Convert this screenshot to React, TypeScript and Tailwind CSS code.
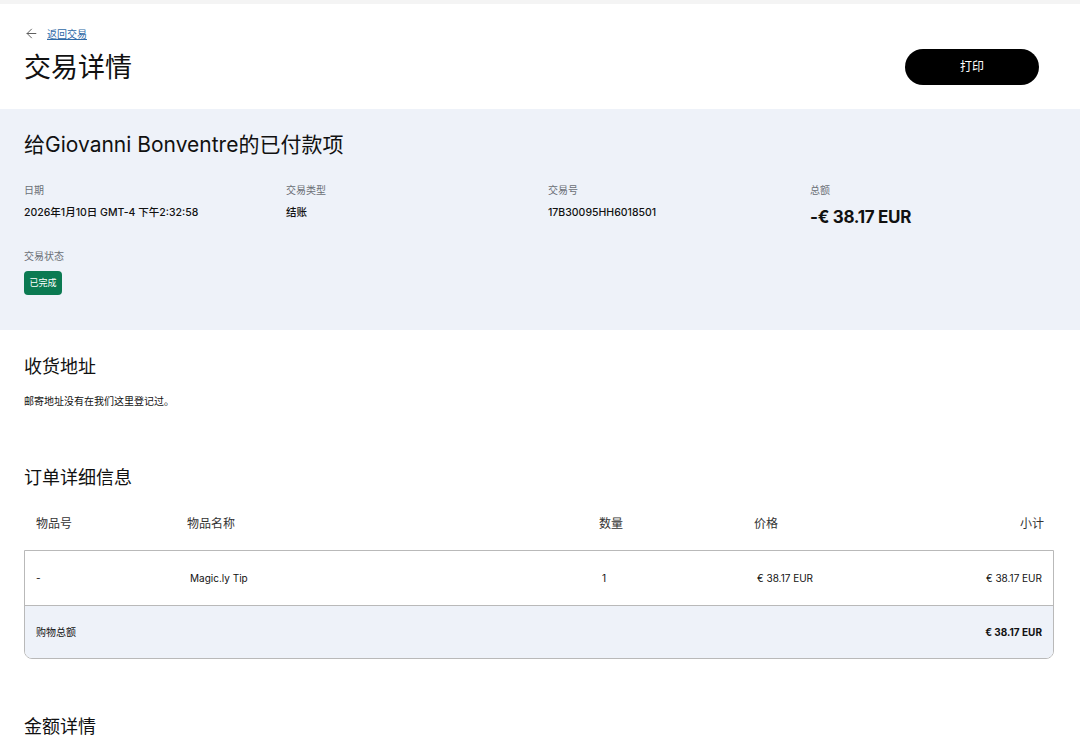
import { ArrowLeft } from "lucide-react";

const font = "font-['Inter','Noto_Sans_CJK_SC',sans-serif]";

const Field = ({ label, children }: { label: string; children: React.ReactNode }) => (
  <div className="flex flex-col">
    <span className="text-[10px] leading-[14px] text-[#6b6f76]">{label}</span>
    <div className="mt-[8px]">{children}</div>
  </div>
);

const valueClass = "block text-[10.5px] leading-[16px] font-medium";

export default function App() {
  return (
    <div className={`${font} min-h-screen bg-white text-[#111]`}>
      <div className="h-[4px] bg-[#f4f4f4]" />

      <header className="flex items-start justify-between px-[24px] pb-[24px] pt-[22px]">
        <div>
          <div className="flex items-center gap-[8px]">
            <ArrowLeft className="h-[15px] w-[15px] text-[#555]" strokeWidth={1.5} />
            <a href="#" className="text-[10px] leading-[14px] text-[#2f6aa7] underline">
              返回交易
            </a>
          </div>
          <h1 className="mt-[11px] text-[27px] leading-[32px] font-normal">交易详情</h1>
        </div>
        <button className="mr-[17px] mt-[23px] h-[36px] w-[134px] rounded-full bg-black text-[12px] text-white">
          打印
        </button>
      </header>

      <section className="bg-[#eef2f9] px-[24px] pb-[35px] pt-[22px]">
        <h2 className="text-[21px] leading-[28px] font-normal">给Giovanni Bonventre的已付款项</h2>
        <div className="mt-[24px] grid grid-cols-[262px_262px_262px_1fr] gap-y-[22px]">
          <Field label="日期">
            <span className={valueClass}>2026年1月10日 GMT-4 下午2:32:58</span>
          </Field>
          <Field label="交易类型">
            <span className={valueClass}>结账</span>
          </Field>
          <Field label="交易号">
            <span className={valueClass}>17B30095HH6018501</span>
          </Field>
          <Field label="总额">
            <span className="mt-[2px] block text-[17px] leading-[20px] font-bold tracking-[-0.3px]">-€ 38.17 EUR</span>
          </Field>
          <div className="flex flex-col items-start">
            <span className="text-[10px] leading-[14px] text-[#6b6f76]">交易状态</span>
            <span className="mt-[8px] inline-flex h-[24px] w-[38px] items-center justify-center rounded-[4px] bg-[#0b7a52] text-[9px] text-white">
              已完成
            </span>
          </div>
        </div>
      </section>

      <section className="px-[24px] pt-[25px]">
        <h3 className="text-[18px] leading-[24px] font-normal">收货地址</h3>
        <p className="mt-[15px] text-[10px] leading-[14px]">邮寄地址没有在我们这里登记过。</p>

        <h3 className="mt-[58px] text-[18px] leading-[24px] font-normal">订单详细信息</h3>

        <div className="mt-[26px] grid grid-cols-[151px_412px_155px_1fr_auto] px-[12px] pb-[18px] text-[12px] leading-[16px] text-[#333]">
          <span>物品号</span>
          <span>物品名称</span>
          <span>数量</span>
          <span>价格</span>
          <span>小计</span>
        </div>

        <div className="w-[1030px] overflow-hidden rounded-b-[8px] border border-[#b9b9b9]">
          <div className="grid h-[54px] grid-cols-[154px_412px_155px_1fr_auto] items-center px-[11px] text-[10px]">
            <span>-</span>
            <span>Magic.ly Tip</span>
            <span>1</span>
            <span>€ 38.17 EUR</span>
            <span>€ 38.17 EUR</span>
          </div>
          <div className="flex h-[53px] items-center justify-between border-t border-[#b9b9b9] bg-[#eef2f9] px-[11px] text-[10px]">
            <span>购物总额</span>
            <span className="font-bold">€ 38.17 EUR</span>
          </div>
        </div>

        <h3 className="mt-[56px] text-[18px] leading-[24px] font-normal">金额详情</h3>
      </section>
    </div>
  );
}
